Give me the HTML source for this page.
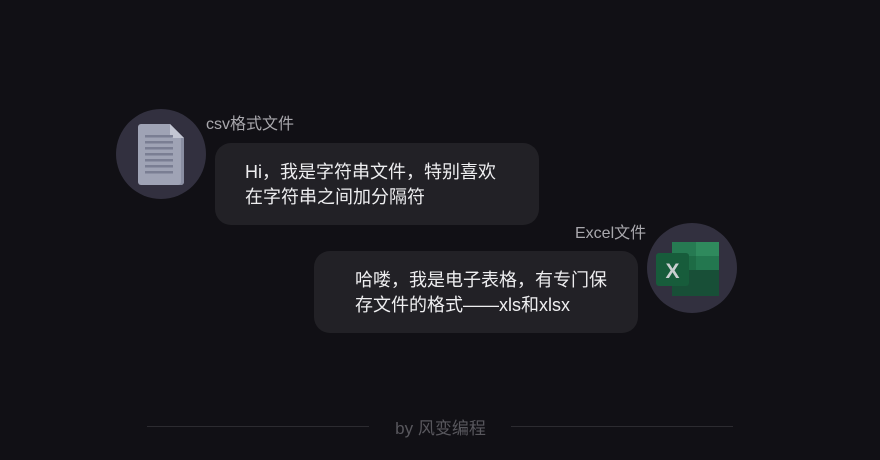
<!DOCTYPE html>
<html><head><meta charset="utf-8"><style>
*{margin:0;padding:0;box-sizing:border-box}
body{width:880px;height:460px;background:#111015;position:relative;overflow:hidden;font-family:"Liberation Sans","Noto Sans CJK SC",sans-serif}
.c{position:absolute;width:90px;height:90px;border-radius:50%;background:#32303f}
.b{position:absolute;background:#222126;border-radius:16px;color:#eeeef0;font-size:18px;line-height:25px}
.l{position:absolute;color:#a9a8ad;font-size:16px;line-height:18px}
.hr{position:absolute;top:426px;height:1px;background:#2c2b30}
</style></head><body>
<div class="c" style="left:116px;top:109px"></div>
<svg style="position:absolute;left:138px;top:124px" width="46" height="61" viewBox="0 0 46 61">
<path d="M3 0H32L46 14V58a3 3 0 0 1-3 3H3a3 3 0 0 1-3-3V3a3 3 0 0 1 3-3z" fill="#9fa3b5"/>
<path d="M32 0L46 14H35a3 3 0 0 1-3-3z" fill="#c3c6d3"/>
<path d="M46 14V58a3 3 0 0 1-3 3H40a3 3 0 0 0 3-3V14z" fill="#8a8ea2"/>
<g fill="#7a7e93"><rect x="7" y="11" width="28" height="2.5"/><rect x="7" y="17" width="28" height="2.5"/><rect x="7" y="23" width="28" height="2.5"/><rect x="7" y="29" width="28" height="2.5"/><rect x="7" y="35" width="28" height="2.5"/><rect x="7" y="41" width="28" height="2.5"/><rect x="7" y="47" width="28" height="2.5"/></g>
</svg>
<div class="l" style="left:206px;top:116px">csv格式文件</div>
<div class="b" style="left:215px;top:143px;width:324px;height:82px;padding:17px 0 0 30px">Hi，我是字符串文件，特别喜欢<br>在字符串之间加分隔符</div>

<div class="c" style="left:647px;top:223px"></div>
<svg style="position:absolute;left:656px;top:242px" width="64" height="55" viewBox="0 0 64 55">
<rect x="16" y="0" width="47" height="54" rx="3" fill="#1d6b45"/>
<rect x="40" y="0" width="23" height="14" fill="#2f8a5d"/>
<rect x="40" y="14" width="23" height="14" fill="#23774f"/>
<rect x="16" y="0" width="24" height="14" fill="#267a52"/>
<rect x="16" y="28" width="47" height="26" fill="#184f37"/>
<rect x="0" y="11" width="33" height="33" rx="3" fill="#175c3b"/>
<text x="16.5" y="36" text-anchor="middle" font-family="Liberation Sans" font-weight="bold" font-size="21" fill="#c9cfd0">X</text>
</svg>
<div class="l" style="left:575px;top:225px">Excel文件</div>
<div class="b" style="left:314px;top:251px;width:324px;height:82px;padding:17px 0 0 41px">哈喽，我是电子表格，有专门保<br>存文件的格式——xls和xlsx</div>

<div class="hr" style="left:147px;width:222px"></div>
<div class="hr" style="left:511px;width:222px"></div>
<div style="position:absolute;left:370px;width:141px;top:414px;text-align:center;color:#58575d;font-size:17px">by 风变编程</div>
</body></html>
